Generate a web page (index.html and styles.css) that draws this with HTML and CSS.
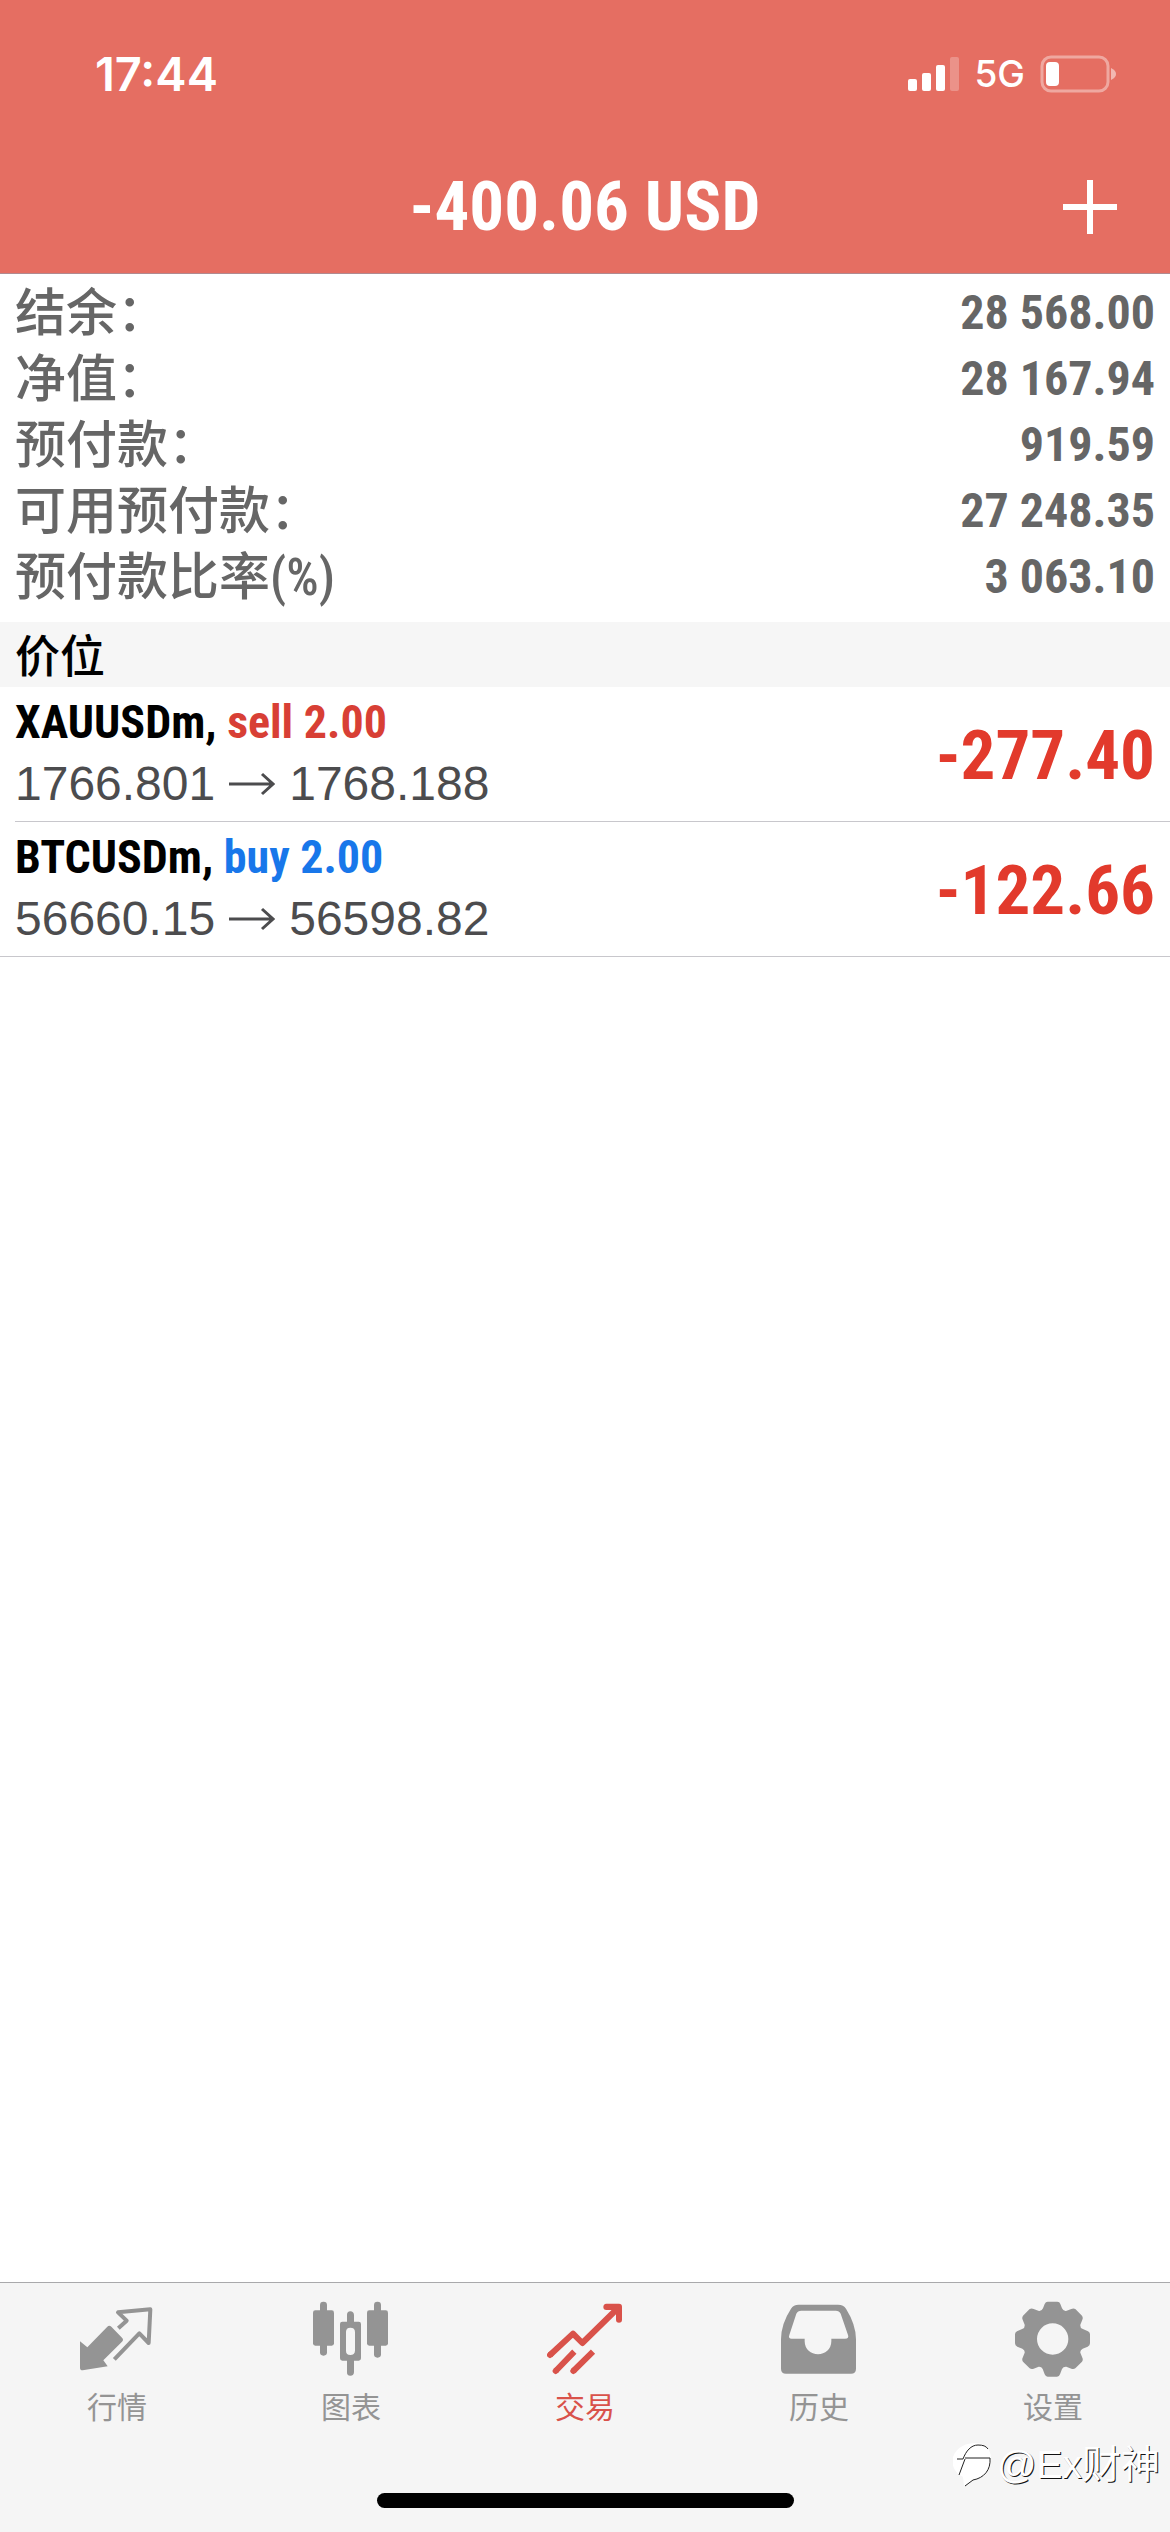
FILE: index.html
```html
<!DOCTYPE html>
<html lang="zh-CN">
<head>
<meta charset="utf-8">
<meta name="viewport" content="width=device-width, initial-scale=1">
<title>交易</title>
<link rel="stylesheet" href="styles.css">
</head>
<body>
<div class="app">
  <header class="header">
    <div class="status-bar">
      <time class="clock">17:44</time>
      <div class="status-icons">
        <svg class="signal" viewBox="0 0 52 38" aria-hidden="true">
          <rect x="0" y="24" width="9" height="12" rx="2"/>
          <rect x="14" y="18" width="9" height="18" rx="2"/>
          <rect x="28" y="10" width="9" height="26" rx="2"/>
          <rect x="42" y="2" width="9" height="34" rx="2" opacity=".25"/>
        </svg>
        <span class="network">5G</span>
        <svg class="battery" viewBox="0 0 77 38" aria-hidden="true">
          <rect x="2" y="2" width="66" height="34" rx="9" fill="none" stroke="#fff" stroke-width="3" opacity=".4"/>
          <path d="M71 13c4 2 5 4 5 6s-1 4-5 6z" opacity=".5"/>
          <rect x="6" y="7" width="13" height="24" rx="4"/>
        </svg>
      </div>
    </div>
    <div class="title-bar">
      <h1 class="title">-400.06 USD</h1>
      <button class="add" type="button" aria-label="新订单">
        <svg viewBox="0 0 54 54" aria-hidden="true"><path d="M0 24h54v6H0zM24 0h6v54h-6z"/></svg>
      </button>
    </div>
  </header>

  <main class="content">
    <dl class="summary">
      <div class="summary-row"><dt>结余：</dt><dd>28 568.00</dd></div>
      <div class="summary-row"><dt>净值：</dt><dd>28 167.94</dd></div>
      <div class="summary-row"><dt>预付款：</dt><dd>919.59</dd></div>
      <div class="summary-row"><dt>可用预付款：</dt><dd>27 248.35</dd></div>
      <div class="summary-row"><dt>预付款比率(%)</dt><dd>3 063.10</dd></div>
    </dl>
    <h2 class="section-title">价位</h2>
    <ul class="positions">
      <li class="position">
        <div class="position-body">
          <div>
            <p class="symbol">XAUUSDm, <span class="sell">sell 2.00</span></p>
            <p class="prices"><span>1766.801</span><svg class="arrow" viewBox="0 0 46 24" aria-label="到"><path d="M0 12h44M33 2l11 10-11 10"/></svg><span>1768.188</span></p>
          </div>
          <strong class="profit">-277.40</strong>
        </div>
      </li>
      <li class="position">
        <div class="position-body">
          <div>
            <p class="symbol">BTCUSDm, <span class="buy">buy 2.00</span></p>
            <p class="prices"><span>56660.15</span><svg class="arrow" viewBox="0 0 46 24" aria-label="到"><path d="M0 12h44M33 2l11 10-11 10"/></svg><span>56598.82</span></p>
          </div>
          <strong class="profit">-122.66</strong>
        </div>
      </li>
    </ul>
  </main>

  <footer class="footer">
    <nav class="tabs">
      <a class="tab" href="#quotes">
        <svg viewBox="237 124 228 228" aria-hidden="true">
          <path d="M240 245l22 18 60-62q6-6 12 0l32 33q6 6 0 12l-56 56 13 18-75 12q-8 0-8-8z"/>
          <path class="line" d="M355 206l25-23-26-25 97-9-5 101-28-29-75 78"/>
        </svg>
        <span>行情</span>
      </a>
      <a class="tab" href="#charts">
        <svg viewBox="939 124 228 228" aria-hidden="true">
          <rect x="960" y="126" width="21" height="162" rx="10"/>
          <rect x="939" y="152" width="63" height="106" rx="7"/>
          <rect x="1122" y="126" width="21" height="168" rx="10"/>
          <rect x="1101" y="152" width="63" height="106" rx="7"/>
          <path fill-rule="evenodd" d="M1041 186v-20q0-11 10-11t11 11v20h14q7 0 7 7v103q0 7-7 7h-14v34q0 11-11 11t-10-11v-34h-14q-7 0-7-7V193q0-7 7-7zm10 18q-13 0-13 13v56q0 13 13 13t14-13v-56q0-13-14-13z"/>
        </svg>
        <span>图表</span>
      </a>
      <a class="tab active" href="#trade" aria-current="page">
        <svg viewBox="201 124 228 228" aria-hidden="true">
          <path class="thick" d="M210 286l69-64 28 28 104-102M227 334l56-58M280 334l59-58" />
          <path class="thick" stroke-linecap="round" d="M210 286l1-1M227 334l1-1M280 334l1-1"/>
          <path d="M379 132h38q9 0 9 9v39q0 9-9 9t-9-9v-20l-14-9h-15q-9 0-9-9t9-10z"/>
        </svg>
        <span>交易</span>
      </a>
      <a class="tab" href="#history">
        <svg viewBox="903 124 228 228" aria-hidden="true">
          <path fill-rule="evenodd" d="M956 135h118q17 0 24 12 30 48 30 92v88q0 15-15 15H918q-15 0-15-15v-88q0-46 30-92 7-12 23-12zm8 18q-11 0-15 9l-21 64q-4 11 7 11h39v8c0 24 19 39 40 39s40-15 40-39v-8h41q13 0 9-11l-22-64q-4-9-15-9z"/>
        </svg>
        <span>历史</span>
      </a>
      <a class="tab" href="#settings">
        <svg viewBox="465 124 228 228" aria-hidden="true">
          <path fill-rule="evenodd" d="M563 126h29q7 0 9 7l5 13q4 9 12 8l16-6q6-3 12 0l20 20q4 6 1 12l-6 15q-1 9 6 12l17 8q6 3 6 9v27q0 7-7 10l-15 6q-8 4-7 12l6 15q3 6-1 12l-20 20q-5 4-12 1l-15-6q-9-1-13 7l-6 16q-2 7-9 7h-28q-6 0-9-7l-6-16q-4-8-12-7l-15 6q-7 3-12-1l-20-20q-4-6-1-12l6-15q1-8-7-12l-15-6q-7-3-7-10v-27q0-6 6-9l17-8q7-3 6-12l-6-15q-3-6 1-12l20-20q6-3 12 0l16 6q8 1 12-8l5-13q3-7 9-7zm15 65a47 47 0 1 0 0 94 47 47 0 1 0 0-94z"/>
        </svg>
        <span>设置</span>
      </a>
    </nav>
    <div class="home-indicator"></div>
    <div class="watermark">
      <svg viewBox="0 0 40 44" aria-hidden="true">
        <path class="bubble" d="M0 14C4 3 14 0 23 0c10 0 15 8 15 15 0 13-8 20-19 22l-8 6-1-9C2 30-2 23 0 14z"/>
        <path d="M4 16h6C13 8 18 2 25 2c5 0 8 1 10 4M12 15h25c1 12-6 20-17 22l-8 6M12 16L6 32"/>
      </svg>
      <span>@Ex财神</span>
    </div>
  </footer>
</div>
</body>
</html>
```
FILE: styles.css
```css
* { box-sizing: border-box; }

body {
  margin: 0;
  background: #fff;
  font-family: "Liberation Sans", "Noto Sans CJK SC", sans-serif;
}

h1, h2, p, dl, dd, ul { margin: 0; padding: 0; }
ul { list-style: none; }

.app {
  display: flex;
  flex-direction: column;
  min-height: 100vh;
}

.header {
  padding: 4px 0;
  background: #e56e62;
  border-bottom: 1px solid #b08a90;
  color: #fff;
}

.header svg { display: block; fill: currentColor; }

.status-bar {
  display: flex;
  justify-content: space-between;
  align-items: center;
  height: 140px;
  padding: 0 53px 0 95px;
}

.clock { font: 600 47px/56px Inter, sans-serif; }

.status-icons { display: flex; align-items: center; }
.signal { width: 52px; height: 38px; }
.network { margin: 0 15px 0 14px; font: 500 37px/48px Inter, sans-serif; }
.battery { width: 77px; height: 38px; }

.title-bar {
  display: grid;
  grid-template-columns: 1fr auto 1fr;
  align-items: center;
  height: 125px;
  padding: 0 53px;
}

.title {
  grid-column: 2;
  font: bold 69px/84px "Roboto Condensed", Roboto, sans-serif;
}

.add {
  justify-self: end;
  width: 54px;
  height: 54px;
  padding: 0;
  border: 0;
  background: none;
  color: #fff;
}

.summary { padding: 7px 15px 11px; color: #666; }

.summary-row {
  display: flex;
  justify-content: space-between;
  height: 66px;
}

.summary dt { font: 500 51px/66px "Roboto Condensed", "Noto Sans CJK SC", sans-serif; }
.summary dd { font: bold 48px/64px "Roboto Condensed", Roboto, sans-serif; }

.section-title {
  padding: 0 15px 2px;
  background: #f6f6f6;
  font: 500 45px/63px "Noto Sans CJK SC", sans-serif;
}

.position { padding-left: 15px; }

.position-body {
  display: flex;
  justify-content: space-between;
  align-items: center;
  padding: 4px 15px 6px 0;
  border-bottom: 1px solid #c8c7cc;
}

.position:last-child { padding-left: 0; border-bottom: 1px solid #c8c7cc; }
.position:last-child .position-body { padding-left: 15px; border: 0; }

.symbol { font: bold 46px/62px "Roboto Condensed", Roboto, sans-serif; }
.sell { color: #d83f35; }
.buy { color: #1877ea; }

.prices {
  display: flex;
  align-items: center;
  gap: 14px;
  color: #4c4c4e;
  font-size: 48px;
  line-height: 62px;
}

.arrow {
  width: 46px;
  height: 24px;
  fill: none;
  stroke: currentColor;
  stroke-width: 3;
}

.profit {
  padding-top: 6px;
  color: #e23a2c;
  font: bold 69px/84px "Roboto Condensed", Roboto, sans-serif;
}

.footer {
  position: relative;
  margin-top: auto;
  padding: 18px 0 24px;
  border-top: 1px solid #a9a9ab;
  background: #f5f5f5;
}

.tabs { display: grid; grid-template-columns: repeat(5, 1fr); }

.tab {
  display: flex;
  flex-direction: column;
  align-items: center;
  gap: 6px;
  color: #949494;
  font: 400 30px/44px "Noto Sans CJK SC", sans-serif;
  text-decoration: none;
}

.tab.active { color: #d9524a; }
.tab svg { width: 76px; height: 76px; fill: currentColor; }
.tab .line { fill: none; stroke: currentColor; stroke-width: 12; stroke-linejoin: round; }
.tab .thick { fill: none; stroke: currentColor; stroke-width: 18; stroke-linejoin: round; }

.home-indicator {
  width: 417px;
  height: 15px;
  margin: 66px auto 0;
  border-radius: 8px;
  background: #000;
}

.watermark {
  position: absolute;
  right: 10px;
  bottom: 39px;
  display: flex;
  align-items: center;
  gap: 4px;
  color: #fff;
  font: 400 39px/56px "Liberation Sans", "Noto Sans CJK SC", sans-serif;
  text-shadow: 1px 1px 0 #111;
}

.watermark svg { width: 40px; height: 44px; fill: none; stroke: #222; stroke-width: 1; }
.watermark .bubble { fill: #fff; stroke: none; }
```
